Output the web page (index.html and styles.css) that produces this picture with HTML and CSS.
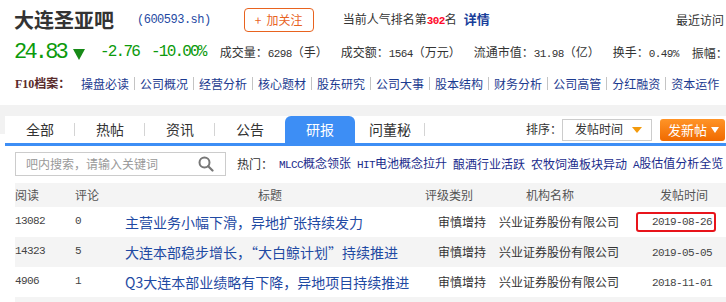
FILE: index.html
```html
<!DOCTYPE html>
<html lang="zh-CN">
<head>
<meta charset="utf-8">
<title>大连圣亚吧</title>
<link rel="stylesheet" href="styles.css">
</head>
<body>
<div class="page">
  <header class="top">
    <div class="row1">
      <h1 class="name">大连圣亚吧</h1>
      <span class="code">(600593.sh)</span>
      <a class="follow" href="#"><span class="plus">+</span>加关注</a>
      <span class="rank">当前人气排名第<b class="n red">302</b>名<a class="detail" href="#">详情</a></span>
      <span class="recent">最近访问</span>
    </div>
    <div class="row2">
      <span class="price">24.83</span>
      <svg class="down" width="12" height="11" viewBox="0 0 12 11"><path d="M0 0H12L6 11Z" fill="#178a17"/></svg>
      <span class="chg">-2.76</span>
      <span class="chg pct">-10.00%</span>
      <span class="stat">成交量：<span class="n">6298</span>（手）</span>
      <span class="stat">成交额：<span class="n">1564</span>（万元）</span>
      <span class="stat">流通市值：<span class="n">31.98</span>（亿）</span>
      <span class="stat">换手：<span class="n">0.49%</span></span>
      <span class="stat">振幅：</span>
    </div>
    <nav class="f10">
      <b class="f10-label">F10档案：</b>
      <a href="#">操盘必读</a>
      <a href="#">公司概况</a>
      <a href="#">经营分析</a>
      <a href="#">核心题材</a>
      <a href="#">股东研究</a>
      <a href="#">公司大事</a>
      <a href="#">股本结构</a>
      <a href="#">财务分析</a>
      <a href="#">公司高管</a>
      <a href="#">分红融资</a>
      <a href="#">资本运作</a>
    </nav>
  </header>
  <div class="band"></div>
  <section class="board">
    <div class="tabbar">
      <ul class="tabs">
        <li class="sep">全部</li>
        <li class="sep">热帖</li>
        <li class="sep">资讯</li>
        <li>公告</li>
        <li class="active">研报</li>
        <li class="sep">问董秘</li>
      </ul>
      <div class="sort">
        <span>排序：</span>
        <div class="select">发帖时间<i class="caret"></i></div>
      </div>
      <a class="post" href="#">发新帖<i class="post-caret"></i></a>
    </div>
    <div class="content">
      <div class="searchrow">
        <div class="search">
          <span>吧内搜索，请输入关键词</span>
          <svg class="mag" width="16" height="16" viewBox="0 0 16 16"><circle cx="6.5" cy="6.5" r="5" fill="none" stroke="#777" stroke-width="2"/><path d="M10.2 10.2L14.5 14.5" stroke="#777" stroke-width="2.2" stroke-linecap="round"/></svg>
        </div>
        <div class="hot">
          <span class="hot-label">热门：</span>
          <a href="#"><span class="n">MLCC</span>概念领张</a>
          <a href="#"><span class="n">HIT</span>电池概念拉升</a>
          <a href="#">酿酒行业活跃</a>
          <a href="#">农牧饲渔板块异动</a>
          <a href="#"><span class="n">A</span>股估值分析全览</a>
        </div>
      </div>
      <div class="table">
        <div class="tr thead">
          <div class="c-read">阅读</div>
          <div class="c-cmt">评论</div>
          <div class="c-title">标题</div>
          <div class="c-rate">评级类别</div>
          <div class="c-org">机构名称</div>
          <div class="c-date">发帖时间</div>
        </div>
        <div class="tr">
          <div class="c-read n">13082</div>
          <div class="c-cmt n">0</div>
          <div class="c-title"><a href="#">主营业务小幅下滑，异地扩张持续发力</a></div>
          <div class="c-rate">审慎增持</div>
          <div class="c-org">兴业证券股份有限公司</div>
          <div class="c-date"><span class="n date hl">2019-08-26</span></div>
        </div>
        <div class="tr alt">
          <div class="c-read n">14323</div>
          <div class="c-cmt n">5</div>
          <div class="c-title"><a href="#">大连本部稳步增长，“大白鲸计划”持续推进</a></div>
          <div class="c-rate">审慎增持</div>
          <div class="c-org">兴业证券股份有限公司</div>
          <div class="c-date"><span class="n date">2019-05-05</span></div>
        </div>
        <div class="tr">
          <div class="c-read n">4906</div>
          <div class="c-cmt n">1</div>
          <div class="c-title"><a href="#">Q3大连本部业绩略有下降，异地项目持续推进</a></div>
          <div class="c-rate">审慎增持</div>
          <div class="c-org">兴业证券股份有限公司</div>
          <div class="c-date"><span class="n date">2018-11-01</span></div>
        </div>
        <div class="tr alt"></div>
      </div>
    </div>
  </section>
</div>
</body>
</html>
```
FILE: styles.css
```css
* { box-sizing: border-box; margin: 0; padding: 0; }
html, body { background: #fff; overflow: hidden; }
body {
  width: 726px;
  font: 12px/1.2 "Noto Sans CJK SC", "Noto Sans", sans-serif;
  color: #333;
}
a { color: inherit; text-decoration: none; }
ul { list-style: none; }

.n {
  font-family: "Liberation Mono", monospace;
  font-size: 11px;
  letter-spacing: -0.6px;
}

/* ---------- header ---------- */
.row1, .row2, .f10, .searchrow, .hot, .tabbar, .sort {
  white-space: nowrap;
}
.row1 > *, .row2 > *, .f10 > *, .searchrow > *, .hot > *, .tabbar > *, .sort > * {
  flex-shrink: 0;
}
.row1 {
  display: flex;
  align-items: center;
  height: 40px;
  padding: 0 2px 0 14px;
}
.name {
  font-size: 20px;
  font-weight: 700;
  line-height: 24px;
  color: #333;
}
.code {
  margin-left: 23px;
  font-family: "Liberation Mono", monospace;
  font-size: 12px;
  letter-spacing: -0.5px;
  color: #1f4aa3;
}
.follow {
  margin-left: 33px;
  width: 70px;
  height: 24px;
  border: 1px solid #e8631f;
  border-radius: 4px;
  color: #e8631f;
  font-size: 12px;
  line-height: 22px;
  padding-left: 10px;
}
.plus { margin-right: 5px; }
.rank { margin-left: 29px; }
.red { color: #ff0a2a; font-weight: 700; }
.detail {
  margin-left: 7px;
  color: #1a3f9b;
  font-weight: 700;
  font-size: 13px;
}
.recent { margin-left: auto; }

.row2 {
  display: flex;
  align-items: center;
  height: 26px;
  padding-left: 14px;
}
.price {
  font-family: "Liberation Mono", monospace;
  font-size: 22px;
  letter-spacing: -2.8px;
  color: #0c9a0c;
}
.down { margin: 3px 15px 0 7px; }
.chg {
  font-family: "Liberation Mono", monospace;
  font-size: 16px;
  letter-spacing: -1.8px;
  color: #0c9a0c;
  margin-right: 12px;
}
.chg.pct { margin-right: 14px; }
.stat { margin-right: 13px; }

.f10 {
  display: flex;
  align-items: center;
  height: 39px;
  padding: 0 0 3px 15px;
}
.f10-label {
  width: 66px;
  font-family: "Liberation Serif", "Noto Sans CJK SC", serif;
  font-size: 12px;
  font-weight: 700;
  color: #5a2b2b;
}
.f10 a {
  display: flex;
  align-items: center;
  color: #1b3a8f;
}
.f10 a + a::before {
  content: "";
  width: 1px;
  height: 13px;
  background: #c4c4c4;
  margin: 0 5px;
}

.band { height: 11px; background: #f2f2f2; }

/* ---------- board ---------- */
.board {
  background: linear-gradient(#f2f2f2, #f2f2f2) 0 0 / 5px 18px no-repeat;
}
.tabbar {
  display: flex;
  align-items: center;
  height: 30px;
  margin-left: 5px;
  padding-right: 1px;
  border-bottom: 3px solid #3d8ef5;
}
.tabs {
  display: flex;
  align-self: flex-end;
}
.tabs li {
  width: 70px;
  height: 27px;
  line-height: 27px;
  text-align: center;
  font-size: 14px;
  color: #333;
}
.tabs li.sep {
  background: linear-gradient(#d4d4d4, #d4d4d4) right center / 1px 13px no-repeat;
}
.tabs li.active {
  background: #3d8ef5;
  color: #fff;
  border-radius: 6px 6px 0 0;
}
.sort {
  margin-left: auto;
  display: flex;
  align-items: center;
}
.select {
  width: 90px;
  height: 22px;
  border: 1px solid #ccc;
  display: flex;
  align-items: center;
  padding: 0 9px 0 12px;
  color: #333;
}
.caret {
  margin-left: auto;
  border-left: 5px solid transparent;
  border-right: 5px solid transparent;
  border-top: 6px solid #f39a0c;
}
.post {
  margin-left: 8px;
  width: 65px;
  height: 22px;
  display: flex;
  align-items: center;
  padding-left: 8px;
  border-radius: 3px;
  background: linear-gradient(#ff9427, #f06a00);
  color: #fff;
  font-size: 13px;
}
.post-caret {
  margin-left: 4px;
  border-left: 4px solid transparent;
  border-right: 4px solid transparent;
  border-top: 6px solid #fff;
}

.content { padding: 6px 0 0 15px; }
.searchrow {
  display: flex;
  align-items: center;
  height: 24px;
}
.search {
  width: 211px;
  height: 24px;
  border: 1px solid #ccc;
  display: flex;
  align-items: center;
  padding: 0 11px 0 10px;
  color: #999;
}
.mag { margin-left: auto; }
.hot {
  margin-left: 11px;
  display: flex;
  align-items: center;
}
.hot-label { margin-right: 6px; }
.hot a {
  color: #1a2c8c;
  margin-right: 6px;
}

/* ---------- table ---------- */
.table { margin-top: 7px; width: 711px; }
.tr {
  display: grid;
  grid-template-columns: 60px 50px 290px 80px 130px 101px;
  align-items: center;
  height: 30px;
  white-space: nowrap;
}
.tr.thead { height: 24px; background: #f4f4f4; color: #555; }
.tr.alt { background: #f4f4f4; }
.c-read, .c-cmt { color: #444; }
.thead .c-read, .thead .c-cmt { color: #555; }
.c-title a { font-size: 14px; color: #1f4aa3; }
.thead .c-title { text-align: center; }
.c-rate { text-align: right; padding-right: 9px; }
.thead .c-rate { text-align: left; padding-left: 10px; padding-right: 0; }
.c-org { padding-left: 4px; }
.thead .c-org { padding-left: 31px; }
.c-date { text-align: right; padding-right: 10px; color: #444; }
.thead .c-date { text-align: left; padding-left: 35px; padding-right: 0; color: #555; }
.date { padding-right: 4px; }
.date.hl {
  display: inline-block;
  line-height: 14px;
  padding: 1px 2px 1px 14px;
  border: 2px solid #e8141b;
  border-radius: 3px;
}
```
